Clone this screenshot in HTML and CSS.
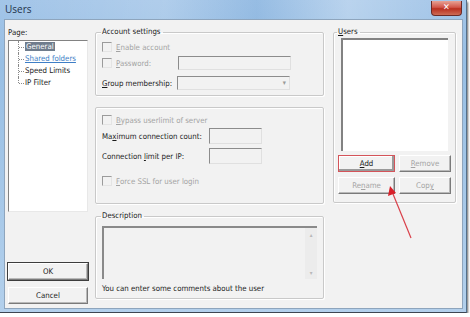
FILE: index.html
```html
<!DOCTYPE html>
<html>
<head>
  <meta charset="UTF-8">
  <title>Users</title>
  <link rel="stylesheet" href="styles.css">
</head>
<body>
  <div class="window">
    <div class="titlebar">
      <span class="title">Users</span>
      <div class="close">&#x2715;</div>
    </div>

    <div class="client">
      <div class="col-left">
        <div class="label">Page:</div>
        <div class="tree">
          <div class="node"><span class="selected">General</span></div>
          <div class="node"><span class="link">Shared folders</span></div>
          <div class="node">Speed Limits</div>
          <div class="node last">IP Filter</div>
        </div>
        <div class="buttons-left">
          <button class="btn default">OK</button>
          <button class="btn">Cancel</button>
        </div>
      </div>

      <div class="col-mid">
        <fieldset class="group account">
          <legend>Account settings</legend>
          <div class="row check disabled"><span class="box"></span><u>E</u>nable account</div>
          <div class="row check disabled"><span class="box"></span><span class="grow"><u>P</u>assword:</span><span class="field wide"></span></div>
          <div class="row gapped"><span class="grow"><u>G</u>roup membership:</span><span class="field wide select"><span class="arrow">&#9662;</span></span></div>
        </fieldset>

        <fieldset class="group limits">
          <div class="row check disabled"><span class="box"></span><u>B</u>ypass userlimit of server</div>
          <div class="row"><span class="grow2">Ma<u>x</u>imum connection count:</span><span class="field small"></span></div>
          <div class="row gapped"><span class="grow2">Connection <u>l</u>imit per IP:</span><span class="field small"></span></div>
          <div class="row check disabled gapped2"><span class="box"></span><u>F</u>orce SSL for user login</div>
        </fieldset>

        <fieldset class="group description">
          <legend>Description</legend>
          <div class="textarea">
            <div class="scroll"><span>&#9652;</span><span>&#9662;</span></div>
          </div>
          <div class="hint">You can enter some comments about the user</div>
        </fieldset>
      </div>

      <div class="col-right">
        <fieldset class="group users">
          <legend><u>U</u>sers</legend>
          <div class="listbox"></div>
          <div class="btn-grid">
            <button class="btn marked"><u>A</u>dd</button>
            <button class="btn off"><u>R</u>emove</button>
            <button class="btn off">Re<u>n</u>ame</button>
            <button class="btn off">Cop<u>y</u></button>
          </div>
        </fieldset>
      </div>
    </div>

    <svg class="annotation" width="470" height="317" viewBox="0 0 470 317">
      <line x1="411" y1="238" x2="393" y2="194" stroke="#d9404a" stroke-width="1.2"/>
      <polygon points="390,186 388,196 396,193" fill="#d9202a"/>
    </svg>
  </div>
</body>
</html>
```

FILE: styles.css
```css
body{
  margin: 0;
  background-color: #ffffff;
  font-family: "DejaVu Sans Condensed", "DejaVu Sans", sans-serif;
  font-size: 7.8px;
  color: #1a1a1a;
}

.window{
  position: relative;
  width: 467px;
  height: 313px;
  box-sizing: border-box;
  padding: 0 3px 3px 4px;
  background: linear-gradient(to bottom, #a3c5e8, #98bfe4 20%, #b3d0ec);
  border-bottom: 1px solid #3d4652;
  border-right: 1px solid #53708c;
  box-shadow: 1px 2px 2px #6b6b6b;
  display: flex;
  flex-direction: column;
}

.titlebar{
  height: 19px;
  flex: none;
  display: flex;
  align-items: center;
  justify-content: space-between;
  background: linear-gradient(to right, rgba(255,255,255,0) 0%, rgba(255,255,255,0.15) 35%, rgba(80,140,200,0.15) 55%, rgba(255,255,255,0.25) 75%, rgba(255,255,255,0) 100%);
}

.title{
  font-family: "Open Sans", "DejaVu Sans", sans-serif;
  font-size: 10px;
  color: #1e324b;
  padding-left: 1px;
  padding-bottom: 1px;
}

.close{
  width: 29px;
  height: 14px;
  margin-top: -2px;
  margin-right: 1px;
  border: 1px solid #6b2a26;
  border-top: none;
  border-radius: 0 0 4px 4px;
  background: linear-gradient(to bottom, #e7a395, #d2574a 45%, #b9301f 55%, #cd6b55);
  color: #ffffff;
  font-size: 9px;
  font-weight: bold;
  text-align: center;
  line-height: 13px;
}

.client{
  flex: 1;
  background-color: #f2f2f2;
  border: 1px solid #8ea5bd;
  display: flex;
  padding: 7px 6px 4px 3px;
}

.col-left{
  width: 80px;
  display: flex;
  flex-direction: column;
}

.label{
  height: 13px;
  line-height: 11px;
}

.tree{
  height: 170px;
  background-color: #ffffff;
  border: 1px solid #7a7a7a;
  border-color: #828282 #e8e8e8 #e8e8e8 #828282;
}

.node{
  position: relative;
  height: 12px;
  line-height: 12px;
  padding-left: 16px;
}

.node::before{
  content: "";
  position: absolute;
  left: 9px;
  top: 0;
  height: 12px;
  border-left: 1px dotted #8a8a8a;
}

.node.last::before{
  height: 6px;
}

.node::after{
  content: "";
  position: absolute;
  left: 10px;
  top: 6px;
  width: 5px;
  border-top: 1px dotted #8a8a8a;
}

.selected{
  background-color: #6f7c8c;
  color: #ffffff;
  padding: 0 1px;
}

.link{
  color: #3e7ec6;
  text-decoration: underline;
}

.buttons-left{
  margin-top: auto;
  display: flex;
  flex-direction: column;
  gap: 7px;
}

.btn{
  height: 17px;
  padding: 0;
  font-family: "DejaVu Sans Condensed", "DejaVu Sans", sans-serif;
  font-size: 7.8px;
  color: #1a1a1a;
  background-color: #f2f2f2;
  border: 1px solid;
  border-color: #ffffff #7a7a7a #7a7a7a #ffffff;
  box-shadow: inset -1px -1px 0 #b9b9b9;
}

.btn.default{
  outline: 1px solid #3d3d3d;
  outline-offset: 0;
}

.btn.off{
  color: #a3a3a3;
}

.btn.marked{
  border-color: #d4545a;
  box-shadow: inset -2px -2px 0 #9a9a9a, inset 1px 1px 0 #ffffff;
}

.col-mid{
  width: 229px;
  margin-left: 7px;
  display: flex;
  flex-direction: column;
}

.group{
  margin: 0;
  padding: 0 6px;
  border: 1px solid #c9c9c9;
  border-radius: 2px;
  box-shadow: 1px 1px 0 #ffffff, inset 1px 1px 0 #ffffff;
  box-sizing: border-box;
}

.group legend{
  padding: 0 2px 0 1px;
  margin-left: -1px;
  line-height: 10px;
}

.account{
  height: 69px;
  padding-top: 2px;
}

.limits{
  height: 97px;
  margin-top: 11px;
  padding-top: 4px;
}

.description{
  height: 88px;
  margin-top: 7px;
  padding-top: 5px;
}

.row{
  display: flex;
  align-items: center;
  height: 16px;
  white-space: nowrap;
}

.row.gapped{
  margin-top: 4px;
}

.row.gapped2{
  margin-top: 9px;
}

.disabled{
  color: #a3a3a3;
}

.box{
  width: 8px;
  height: 8px;
  margin-right: 4px;
  border: 1px solid;
  border-color: #9b9b9b #e4e4e4 #e4e4e4 #9b9b9b;
  background-color: #f2f2f2;
}

.grow{
  width: 62px;
  color: #1a1a1a;
}

.check .grow{
  color: #a3a3a3;
}

.row > .grow:first-child{
  width: 75px;
}

.grow2{
  width: 107px;
}

.field{
  height: 14px;
  box-sizing: border-box;
  background-color: #f2f2f2;
  border: 1px solid;
  border-color: #8c8c8c #e0e0e0 #e0e0e0 #8c8c8c;
}

.field.wide{
  width: 113px;
}

.field.small{
  width: 53px;
  height: 16px;
}

.select{
  display: flex;
  justify-content: flex-end;
  align-items: center;
}

.arrow{
  color: #9a9a9a;
  font-size: 7px;
  padding-right: 3px;
}

.textarea{
  height: 51px;
  background-color: #f2f2f2;
  border: 1px solid;
  border-color: #8a8a8a #e0e0e0 #e0e0e0 #8a8a8a;
  border-width: 2px 0 0 2px;
  display: flex;
  justify-content: flex-end;
}

.scroll{
  width: 12px;
  background-color: #ececec;
  color: #b8b8b8;
  font-size: 6px;
  display: flex;
  flex-direction: column;
  justify-content: space-between;
  align-items: center;
  padding: 3px 0;
}

.hint{
  margin-top: 5px;
}

.col-right{
  width: 123px;
  margin-left: 9px;
}

.users{
  height: 176px;
  padding: 0 4px 0 4px;
}

.listbox{
  height: 111px;
  margin: 1px 3px 0 3px;
  background-color: #ffffff;
  border: 1px solid;
  border-color: #828282 #dcdcdc #dcdcdc #828282;
  border-width: 2px 0 0 2px;
}

.btn-grid{
  display: grid;
  grid-template-columns: 57px 52px;
  column-gap: 4px;
  row-gap: 5px;
  margin-top: 4px;
}

.annotation{
  position: absolute;
  left: 0;
  top: 0;
  pointer-events: none;
}
```
